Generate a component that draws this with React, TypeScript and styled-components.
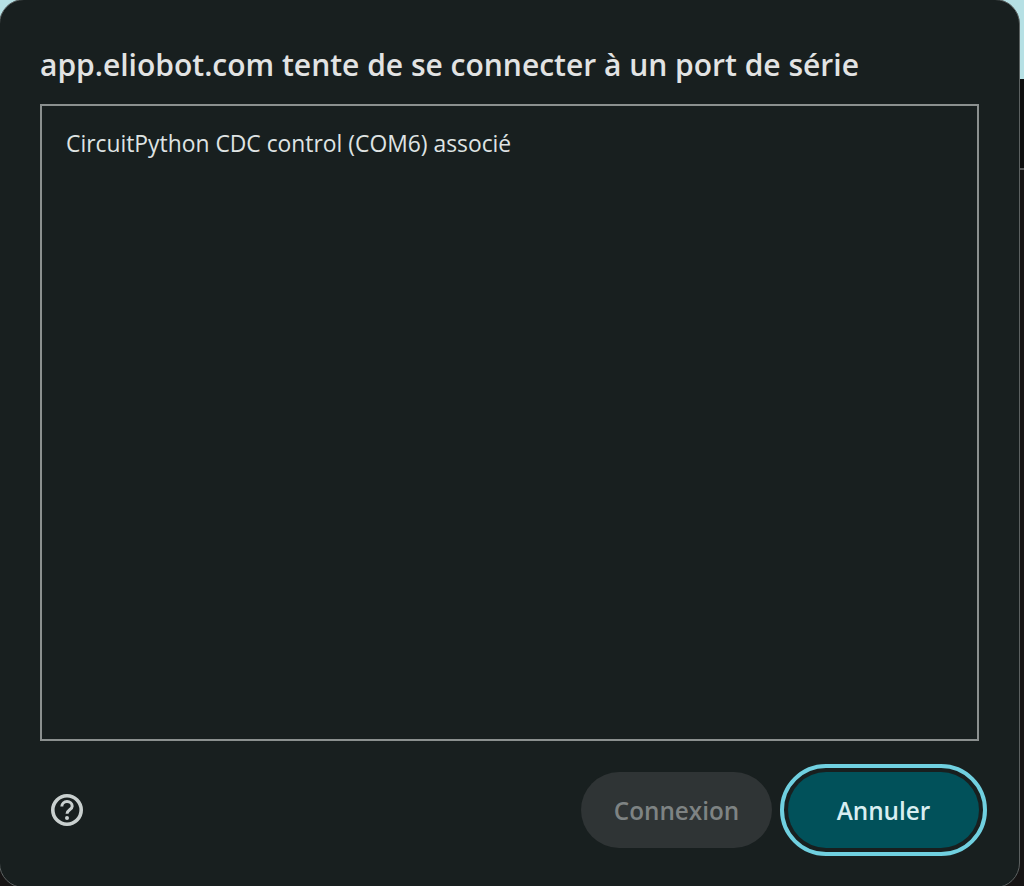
import React from "react";
import styled, { createGlobalStyle } from "styled-components";

const Global = createGlobalStyle`
  html, body { margin: 0; padding: 0; height: 100%; background: #111111; }
  #root { height: 100%; }
  * { box-sizing: border-box; }
`;

const Page = styled.div`
  width: 1024px;
  height: 886px;
  overflow: hidden;
  background: linear-gradient(
    to bottom,
    #b6e0e4 0,
    #b6e0e4 79px,
    #0e0e0e 79px,
    #0e0e0e 168px,
    #5a5a5a 168px,
    #5a5a5a 170px,
    #161414 170px,
    #161414 100%
  );
  font-family: "Open Sans", "Noto Sans", sans-serif;
`;

const Dialog = styled.div`
  width: 1021px;
  height: 889px;
  margin: -1px 0 0 -1px;
  background: #181f1f;
  border: 1px solid #5c6161;
  border-radius: 25px;
  padding: 0 40px;
  display: flex;
  flex-direction: column;
`;

const Title = styled.h1`
  margin: 0;
  height: 104px;
  padding-top: 46px;
  font-size: 30px;
  line-height: 38px;
  font-weight: 600;
  color: #e2e3e3;
  white-space: nowrap;
`;

const List = styled.div`
  height: 637px;
  border: 2px solid #8b908f;
  padding: 23px 24px;
`;

const Item = styled.div`
  font-size: 22.85px;
  line-height: 30px;
  color: #dfe3e3;
`;

const Footer = styled.div`
  display: flex;
  align-items: center;
  justify-content: space-between;
  margin-top: 31px;
`;

const Help = styled.div`
  width: 34px;
  height: 34px;
  margin-left: 10px;
  color: #c9d0cf;
  display: flex;
`;

const Actions = styled.div`
  display: flex;
  gap: 16px;
`;

const Button = styled.button<{ $primary?: boolean }>`
  width: 191px;
  height: 76px;
  border: 0;
  border-radius: 38px;
  font-family: inherit;
  font-size: 24.3px;
  font-weight: 600;
  background: ${(p) => (p.$primary ? "#01515a" : "#2f3435")};
  color: ${(p) => (p.$primary ? "#d8eef1" : "#7e8383")};
  ${(p) => p.$primary && "outline: 4px solid #70d0e0; outline-offset: 4px;"}
`;

export default function App() {
  return (
    <Page>
      <Global />
      <Dialog>
        <Title>app.eliobot.com tente de se connecter à un port de série</Title>
        <List>
          <Item>CircuitPython CDC control (COM6) associé</Item>
        </List>
        <Footer>
          <Help>
            <svg viewBox="0 0 34 34" width="34" height="34" fill="none" stroke="currentColor">
              <circle cx="17" cy="17" r="14.2" strokeWidth="3.6" />
              <path d="M11.8 13.6c0-3 2.3-5 5.2-5s5.2 1.9 5.2 4.6c0 3.6-5.2 3.7-5.2 7.6" strokeWidth="3" />
              <circle cx="17" cy="25" r="2" fill="currentColor" stroke="none" />
            </svg>
          </Help>
          <Actions>
            <Button disabled>Connexion</Button>
            <Button $primary>Annuler</Button>
          </Actions>
        </Footer>
      </Dialog>
    </Page>
  );
}
